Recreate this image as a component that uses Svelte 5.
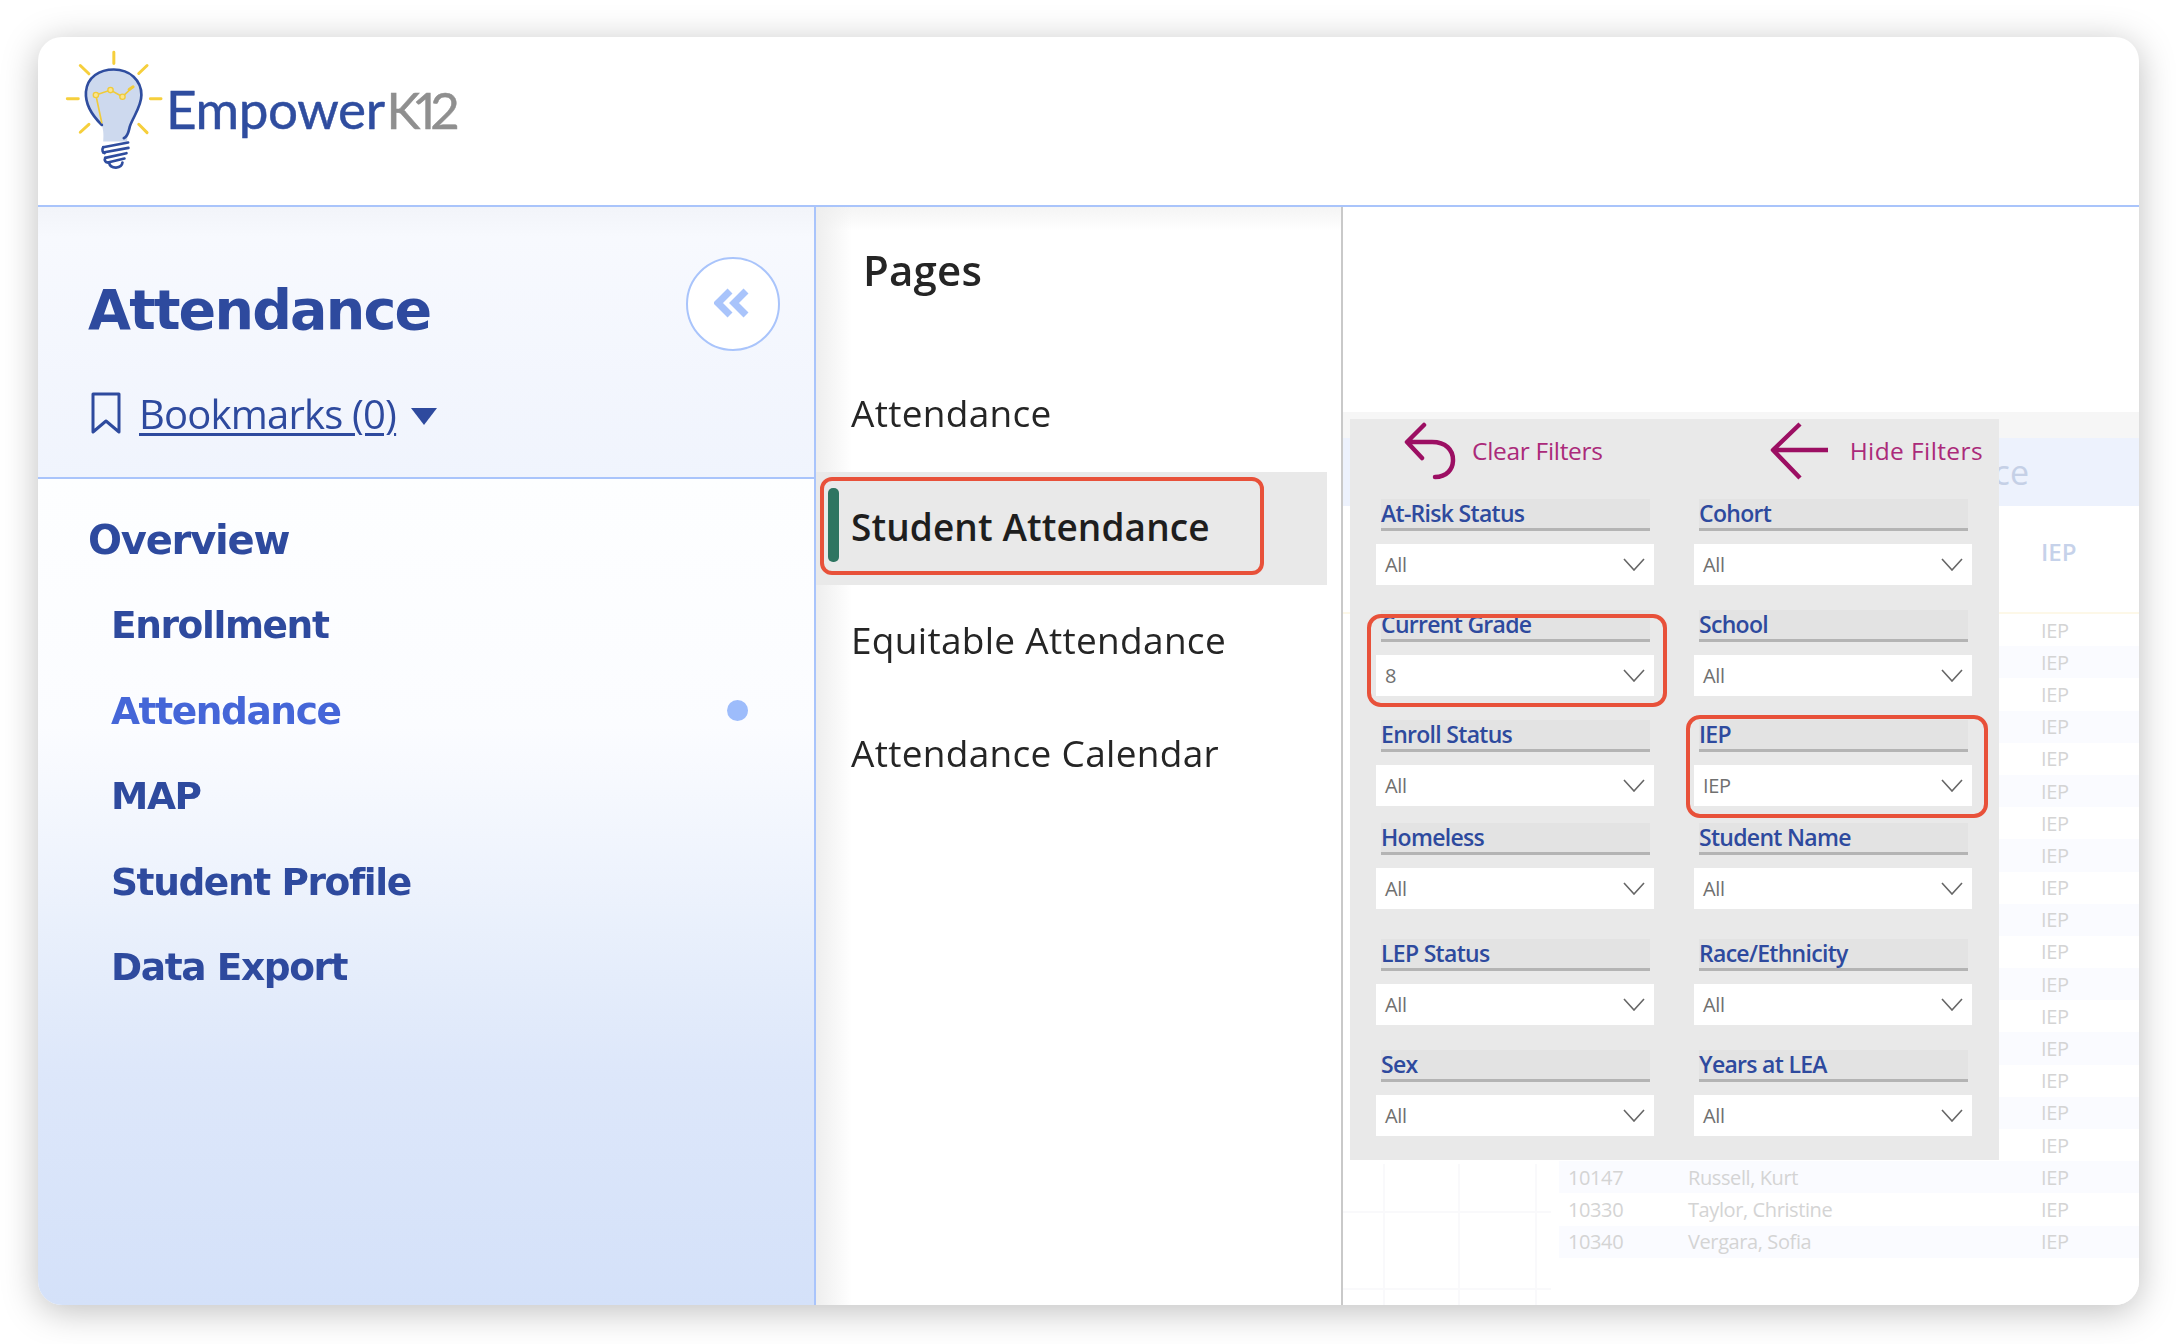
<script>
  const nav = [
    { label: 'Enrollment' },
    { label: 'Attendance', active: true },
    { label: 'MAP' },
    { label: 'Student Profile' },
    { label: 'Data Export' }
  ];
  const pages = [
    { label: 'Attendance' },
    { label: 'Student Attendance', active: true },
    { label: 'Equitable Attendance' },
    { label: 'Attendance Calendar' }
  ];
  const filters = [
    { label: 'At-Risk Status', value: 'All' },
    { label: 'Cohort', value: 'All' },
    { label: 'Current Grade', value: '8', mark: 'mark-grade' },
    { label: 'School', value: 'All' },
    { label: 'Enroll Status', value: 'All' },
    { label: 'IEP', value: 'IEP', mark: 'mark-iep' },
    { label: 'Homeless', value: 'All' },
    { label: 'Student Name', value: 'All' },
    { label: 'LEP Status', value: 'All' },
    { label: 'Race/Ethnicity', value: 'All' },
    { label: 'Sex', value: 'All' },
    { label: 'Years at LEA', value: 'All' }
  ];
  const named = {
    17: ['10147', 'Russell, Kurt'],
    18: ['10330', 'Taylor, Christine'],
    19: ['10340', 'Vergara, Sofia']
  };
  const rows = Array.from({ length: 20 }, (_, i) => named[i] ?? ['', '']);
</script>

<div class="page">
<div class="card">
  <header class="top">
    <svg class="bulb" viewBox="75 60 295 360" aria-hidden="true">
      <g stroke="#f6cf3c" stroke-width="9" stroke-linecap="round" fill="none">
        <path d="M222 66V100M121 106L147 131M322 106L297 130M82 206H115M332 206H364M121 307L147 283M322 308L297 283" />
      </g>
      <path d="M186 285C150 250 136 215 138 185C142 140 180 118 222 118C270 118 305 150 305 195C305 230 280 260 270 290C265 315 262 325 262 335L190 335C192 310 190 300 186 285Z" fill="#cdd9ee" />
      <path d="M186 285C150 250 136 215 138 185C142 140 180 118 222 118C270 118 305 150 305 195C305 230 280 260 270 290C266 305 266 318 252 325" fill="none" stroke="#2f4d9f" stroke-width="8" stroke-linecap="round" />
      <path d="M186 280L168 195L212 180L248 200L280 170" fill="none" stroke="#f0cb3a" stroke-width="5" />
      <g fill="#fbe58f" stroke="#f0cb3a" stroke-width="4">
        <circle cx="168" cy="195" r="8" /><circle cx="212" cy="180" r="8" /><circle cx="248" cy="200" r="8" />
      </g>
      <path d="M280 170L268 178" stroke="#f0cb3a" stroke-width="9" stroke-linecap="round" />
      <g fill="none" stroke="#2f4d9f" stroke-width="8" stroke-linecap="round">
        <path d="M190 352L265 338M190 368L266 354M196 384L260 370M204 398L254 386" />
        <path d="M190 352C184 362 190 368 194 370M196 384C192 392 198 398 204 398M208 400C212 418 246 418 248 398" />
      </g>
    </svg>
    <div class="logo-text"><span class="emp">Empower</span><span class="k12">K12</span></div>
  </header>

  <div class="body">
    <aside class="side">
      <div class="side-top">
        <div class="title-row">
          <h1>Attendance</h1>
          <button class="collapse" aria-label="Collapse">
            <svg viewBox="0 0 38 30" width="38" height="30" aria-hidden="true">
              <path d="M16 3L4 15L16 27M32 3L20 15L32 27" fill="none" stroke="#a9c4fb" stroke-width="7" />
            </svg>
          </button>
        </div>
        <div class="bookmarks">
          <svg viewBox="0 0 32 44" width="32" height="44" aria-hidden="true">
            <path d="M3 3H29V41L16 30L3 41Z" fill="none" stroke="#2e4a9e" stroke-width="3" stroke-linejoin="round" />
          </svg>
          <span class="bm-link">Bookmarks (0)</span>
          <i class="caret"></i>
        </div>
      </div>
      <nav class="side-nav">
        <div class="nav-head">Overview</div>
        {#each nav as item}
          <div class="nav-item" class:active={item.active}>
            <span>{item.label}</span>
            {#if item.active}<i class="dot"></i>{/if}
          </div>
        {/each}
      </nav>
    </aside>

    <section class="pages">
      <h2>Pages</h2>
      <ul>
        {#each pages as p}
          <li class:active={p.active}>
            {#if p.active}<i class="bar"></i><i class="mark"></i>{/if}
            {p.label}
          </li>
        {/each}
      </ul>
    </section>

    <main class="report">
      <div class="band"></div>
      <div class="table-title">ce</div>
      <div class="col-head"><span>IEP</span></div>
      <div class="rows">
        {#each rows as r}
          <div class="row">
            <span class="id">{r[0]}</span><span class="name">{r[1]}</span><span>IEP</span>
          </div>
        {/each}
      </div>

      <div class="filters">
        <div class="actions">
          <div class="action">
            <svg viewBox="0 0 52 58" width="52" height="58" aria-hidden="true">
              <path d="M20 3L3 20L18 36M4 20H28C42 20 49 28 49 38C49 47 43 55 31 55" fill="none" stroke="#9c0f63" stroke-width="4.5" stroke-linecap="round" stroke-linejoin="round" />
            </svg>
            <span>Clear Filters</span>
          </div>
          <div class="action hide">
            <svg viewBox="0 0 58 58" width="58" height="58" aria-hidden="true">
              <path d="M30 2L3 28L30 56M3 28H58" fill="none" stroke="#9c0f63" stroke-width="4.5" stroke-linejoin="round" />
            </svg>
            <span>Hide Filters</span>
          </div>
        </div>
        <div class="grid">
          {#each filters as f}
            <div class="filter {f.mark ?? ''}">
              <div class="f-label">{f.label}</div>
              <div class="f-select">
                <span>{f.value}</span>
                <svg viewBox="0 0 22 13" width="22" height="13" aria-hidden="true">
                  <path d="M1 1L11 12L21 1" fill="none" stroke="#666" stroke-width="1.6" />
                </svg>
              </div>
            </div>
          {/each}
        </div>
      </div>
    </main>
  </div>
</div>
</div>

<style>
  :global(body) { margin: 0; background: #fff; }
  * { box-sizing: border-box; }
  .page {
    height: 1344px;
    padding: 37px 37px 0 38px;
    overflow: hidden;
  }
  .card {
    width: 2101px;
    height: 1268px;
    border-radius: 24px;
    overflow: hidden;
    background: #fff;
    box-shadow: 0 6px 36px rgba(0, 0, 0, 0.26);
    display: flex;
    flex-direction: column;
    font-family: "Open Sans", sans-serif;
    filter: blur(0.4px);
  }
  .top {
    height: 170px;
    flex: none;
    border-bottom: 2px solid #a9c4fb;
    display: flex;
    align-items: flex-start;
    padding: 13px 0 0 27px;
  }
  .bulb { width: 98px; height: 120px; flex: none; }
  .logo-text {
    margin: 27px 0 0 3px;
    font-family: Lato, sans-serif;
    font-size: 53px;
    line-height: 64px;
    letter-spacing: -0.4px;
    -webkit-text-stroke: 0.5px currentColor;
  }
  .emp { color: #2f4d9f; }
  .k12 { color: #8f8f8f; margin-left: 2px; letter-spacing: -5px; font-size: 51px; font-feature-settings: "pnum"; }

  .body { flex: 1; display: flex; min-height: 0; }
  .side {
    width: 778px;
    flex: none;
    border-right: 2px solid #a9c4fb;
    display: flex;
    flex-direction: column;
    font-family: "DejaVu Sans", sans-serif;
    color: #2e4a9e;
  }
  .side-top {
    height: 272px;
    flex: none;
    border-bottom: 2px solid #a9c4fb;
    background: linear-gradient(#f2f4f9, #f7f9fe 30px, #f0f4fd);
    padding: 50px 0 0 50px;
  }
  .title-row {
    display: flex;
    justify-content: space-between;
    align-items: flex-start;
    padding-right: 34px;
  }
  h1 {
    margin: 17px 0 0;
    font-size: 55.5px;
    line-height: 72px;
    font-weight: 700;
    letter-spacing: -1.8px;
  }
  .collapse {
    width: 94px;
    height: 94px;
    border: 2px solid #a9c4fb;
    border-radius: 50%;
    background: #fff;
    padding: 0 1px 3px 0;
    display: flex;
    align-items: center;
    justify-content: center;
  }
  .bookmarks {
    display: flex;
    align-items: center;
    margin: 38px 0 0 2px;
    height: 48px;
  }
  .bm-link {
    margin-left: 17px;
    font-family: "Open Sans", sans-serif;
    font-size: 40px;
    letter-spacing: -0.8px;
    text-decoration: underline;
    text-decoration-thickness: 3px;
    text-underline-offset: 4px;
  }
  .caret {
    margin: 6px 0 0 15px;
    border-left: 13px solid transparent;
    border-right: 13px solid transparent;
    border-top: 17px solid #2e4a9e;
  }
  .side-nav {
    flex: 1;
    background: linear-gradient(#fdfeff, #fbfcff 30%, #e5edfb 60%, #dde7fa 72%, #d4e1f9);
    padding: 30px 0 0 50px;
    font-size: 37.5px;
    font-weight: 700;
    letter-spacing: -1.4px;
  }
  .nav-head { height: 62px; line-height: 62px; margin-bottom: 23px; font-size: 40px; letter-spacing: -1.2px; }
  .nav-item {
    height: 62px;
    line-height: 62px;
    margin: 0 0 23.5px 23px;
    display: flex;
    align-items: center;
    justify-content: space-between;
    padding-right: 66px;
  }
  .nav-item.active { color: #4566d8; }
  .dot { width: 21px; height: 21px; border-radius: 50%; background: #9dbcfb; }

  .pages {
    width: 527px;
    flex: none;
    border-right: 2px solid #c9c9c9;
    background: linear-gradient(#f4f4f4, #fff 24px);
    position: relative;
    color: #252525;
  }
  .pages::before {
    content: "";
    position: absolute;
    left: 0;
    top: 0;
    bottom: 0;
    width: 36px;
    background: linear-gradient(90deg, #eee, rgba(255, 255, 255, 0));
  }
  h2 {
    margin: 36px 0 0 47px;
    font-size: 42px;
    line-height: 54px;
    font-weight: 600;
    position: relative;
    letter-spacing: 0.2px;
  }
  .pages ul { list-style: none; margin: 61px 0 0; padding: 0; position: relative; }
  .pages li {
    height: 113.5px;
    width: 511px;
    padding: 0 0 5px 35px;
    display: flex;
    align-items: center;
    font-size: 37px;
    letter-spacing: 0.3px;
    position: relative;
  }
  .pages li.active { background: #e9e9e9; font-weight: 600; color: #1e1e1e; letter-spacing: 0.1px; padding-bottom: 4px; }
  .bar {
    position: absolute;
    left: 12px;
    top: 16px;
    width: 11px;
    height: 74px;
    border-radius: 5px;
    background: #2e7561;
  }
  .mark {
    position: absolute;
    left: 4px;
    top: 5px;
    width: 444px;
    height: 98px;
    border: 4px solid #e8513a;
    border-radius: 12px;
  }

  .report {
    flex: 1;
    min-width: 0;
    position: relative;
    background:
      linear-gradient(#f9f9fb, #f9f9fb) 40px 957px / 2px 100% no-repeat,
      linear-gradient(#f9f9fb, #f9f9fb) 115px 957px / 2px 100% no-repeat,
      linear-gradient(#f9f9fb, #f9f9fb) 192px 957px / 2px 100% no-repeat,
      linear-gradient(#f9f9fb, #f9f9fb) 0 1004px / 208px 2px no-repeat,
      linear-gradient(#f9f9fb, #f9f9fb) 0 1081px / 208px 2px no-repeat,
      #fff;
    padding-top: 205px;
    font-family: "Open Sans", sans-serif;
  }
  .band { height: 26px; background: #f6f6f6; }
  .table-title {
    height: 68px;
    background: #edf2fd;
    text-align: right;
    padding-right: 110px;
    line-height: 68px;
    font-size: 34px;
    color: #c5d0e6;
    white-space: nowrap;
  }
  .col-head {
    height: 108px;
    border-bottom: 2px solid #fdf8e8;
    padding: 29px 0 0 698px;
    font-size: 24px;
    color: #c6d2ea;
    font-weight: 600;
  }
  .row {
    height: 32.2px;
    margin-left: 216px;
    display: flex;
    align-items: center;
    padding-left: 9px;
    font-size: 20px;
    color: #d4d4d4;
    letter-spacing: -0.4px;
  }
  .row:nth-child(even) { background: #fafbff; }
  .id { width: 120px; flex: none; }
  .name { width: 353px; flex: none; }

  .filters {
    position: absolute;
    left: 7px;
    top: 212px;
    width: 649px;
    height: 741px;
    background: #e9e9e9;
    padding-left: 26px;
  }
  .actions {
    height: 80px;
    display: flex;
    justify-content: space-between;
    padding: 4px 16px 0 28px;
  }
  .action {
    display: flex;
    align-items: center;
    height: 58px;
    gap: 16px;
    color: #ab2a7a;
    font-size: 24.5px;
    letter-spacing: -0.3px;
  }
  .action svg { flex: none; margin-top: -2px; }
  .action span { padding-bottom: 3px; }
  .action.hide { gap: 22px; letter-spacing: 0.4px; }
  .grid {
    display: grid;
    grid-template-columns: 278px 278px;
    grid-template-rows: 111px 110px 103px 116px 111px 86px;
    column-gap: 40px;
  }
  .filter { position: relative; }
  .f-label {
    height: 32px;
    margin: 0 4px 0 5px;
    background: #e3e3e3;
    border-bottom: 3px solid #b4b4b4;
    color: #2e4a9e;
    font-size: 23px;
    line-height: 28px;
    font-weight: 600;
    letter-spacing: -0.7px;
    white-space: nowrap;
  }
  .f-select {
    margin-top: 13px;
    height: 41px;
    background: #fff;
    display: flex;
    align-items: center;
    justify-content: space-between;
    padding: 0 9px 0 9px;
    color: #707070;
    font-size: 20px;
    letter-spacing: -0.3px;
  }
  .mark-grade::after,
  .mark-iep::after {
    content: "";
    position: absolute;
    box-sizing: border-box;
    border: 4px solid #e8513a;
    border-radius: 14px;
    pointer-events: none;
  }
  .mark-grade::after { left: -9px; right: -13px; top: 4px; height: 93px; }
  .mark-iep::after { left: -8px; right: -16px; top: -5px; height: 103px; }
</style>
